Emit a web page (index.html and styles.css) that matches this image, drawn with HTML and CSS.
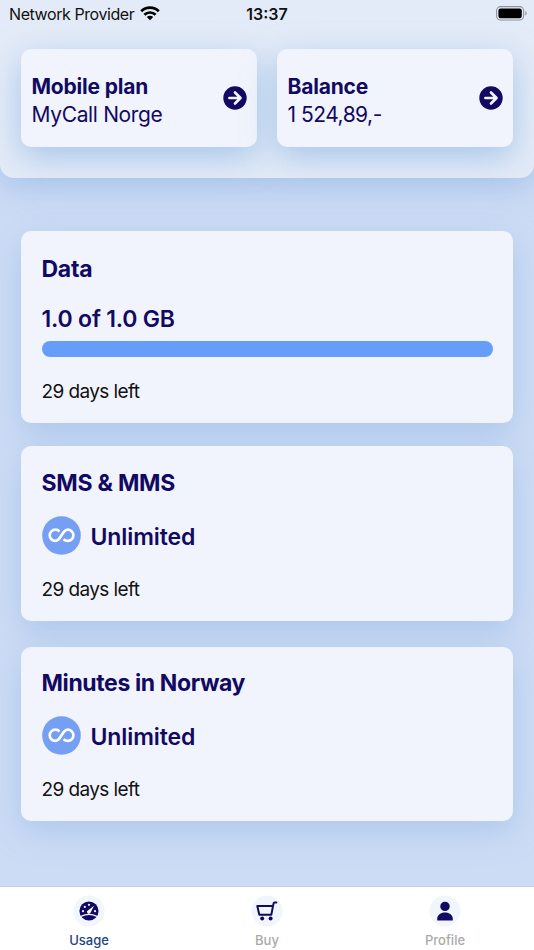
FILE: index.html
```html
<!DOCTYPE html>
<html lang="en">

<head>
	<meta charset="utf-8">
	<title>Usage</title>
	<link rel="stylesheet" href="styles.css">
</head>

<body>

	<header class="header">
		<div class="status">
			<div class="provider">
				<span>Network Provider</span>
				<svg class="wifi" width="20" height="15" viewBox="0 0 20 15" fill="none" stroke="#000" stroke-width="2.7">
					<path d="M1.2 5.3a12.6 12.6 0 0 1 17.6 0M4.4 8.8a8 8 0 0 1 11.2 0" />
					<path d="M10 14.3 6.8 11.1a4.6 4.6 0 0 1 6.4 0z" fill="#000" stroke="none" />
				</svg>
			</div>
			<div class="time">13:37</div>
			<svg class="battery" width="31" height="15" viewBox="0 0 31 15">
				<rect x=".6" y=".6" width="27" height="13.4" rx="4" fill="none" stroke="#8d929d" stroke-width="1.1" />
				<rect x="2.4" y="2.4" width="23.4" height="9.8" rx="2.3" />
				<path d="M29.3 5v4.7c1.8-.8 1.8-3.9 0-4.7z" fill="#8d929d" />
			</svg>
		</div>

		<div class="plans">
			<a class="plan">
				<div>
					<div class="plan-title">Mobile plan</div>
					<div class="plan-text">MyCall Norge</div>
				</div>
				<svg width="24" height="24" viewBox="0 0 24 24">
					<circle cx="12" cy="12" r="11.7" fill="#120a62" />
					<path d="M6.4 12h10.6M12 6.5l5.5 5.5-5.5 5.5" fill="none" stroke="#f2f5fd" stroke-width="2.7" stroke-linecap="round" stroke-linejoin="round" />
				</svg>
			</a>
			<a class="plan">
				<div>
					<div class="plan-title">Balance</div>
					<div class="plan-text sum">1 524,89,-</div>
				</div>
				<svg width="24" height="24" viewBox="0 0 24 24">
					<circle cx="12" cy="12" r="11.7" fill="#120a62" />
					<path d="M6.4 12h10.6M12 6.5l5.5 5.5-5.5 5.5" fill="none" stroke="#f2f5fd" stroke-width="2.7" stroke-linecap="round" stroke-linejoin="round" />
				</svg>
			</a>
		</div>
	</header>

	<main class="cards">
		<section class="card data">
			<h2>Data</h2>
			<div class="amount gb">1.0 of 1.0 GB</div>
			<div class="bar"></div>
			<p>29 days left</p>
		</section>

		<section class="card">
			<h2>SMS &amp; MMS</h2>
			<div class="unlimited">
				<svg width="39" height="39" viewBox="0 0 39 39">
					<circle cx="19.5" cy="19.5" r="19.3" fill="#759ff3" />
					<path d="M17.6 15.4c-1.2-1.1-2.7-1.7-4.3-1.7a5.6 5.6 0 0 0 0 11.2c5.9 0 6.6-11.2 12.5-11.2a5.6 5.6 0 0 1 0 11.2c-1.6 0-3.1-.6-4.3-1.7" fill="none" stroke="#fff" stroke-width="2.7" />
				</svg>
				<span class="amount">Unlimited</span>
			</div>
			<p>29 days left</p>
		</section>

		<section class="card">
			<h2 class="minutes">Minutes in Norway</h2>
			<div class="unlimited">
				<svg width="39" height="39" viewBox="0 0 39 39">
					<circle cx="19.5" cy="19.5" r="19.3" fill="#759ff3" />
					<path d="M17.6 15.4c-1.2-1.1-2.7-1.7-4.3-1.7a5.6 5.6 0 0 0 0 11.2c5.9 0 6.6-11.2 12.5-11.2a5.6 5.6 0 0 1 0 11.2c-1.6 0-3.1-.6-4.3-1.7" fill="none" stroke="#fff" stroke-width="2.7" />
				</svg>
				<span class="amount">Unlimited</span>
			</div>
			<p>29 days left</p>
		</section>
	</main>

	<nav class="tabs">
		<a class="tab active">
			<svg width="32" height="32" viewBox="0 0 32 32">
				<circle cx="16" cy="16" r="15.5" fill="#f1f5fc" />
				<circle cx="16" cy="16" r="9.6" fill="#120a62" />
				<path d="M8 21.4q8-4 16 0" fill="none" stroke="#f1f5fc" stroke-width="1.2" />
				<path d="M14 16.2 21 10.8l-3.6 7.2a2 2 0 0 1-3.4-1.8z" fill="#fff" />
				<g fill="#f1f5fc">
					<circle cx="10" cy="16.2" r="1.1" />
					<circle cx="11.8" cy="11.9" r="1.1" />
					<circle cx="16" cy="9.8" r="1.1" />
					<circle cx="22" cy="16.2" r="1.1" />
				</g>
			</svg>
			<span>Usage</span>
		</a>
		<a class="tab">
			<svg width="32" height="32" viewBox="0 0 32 32">
				<circle cx="16" cy="16" r="15.5" fill="#f1f5fc" />
				<path d="M25.4 7.6h-1.7q-1 0-1.2 1l-.5 2.5H6.3l2 8.6h12L22 11.1" fill="none" stroke="#120a62" stroke-width="2" stroke-linecap="round" stroke-linejoin="round" />
				<circle cx="11.2" cy="23.6" r="2" fill="#120a62" />
				<circle cx="19.6" cy="23.6" r="2" fill="#120a62" />
			</svg>
			<span>Buy</span>
		</a>
		<a class="tab">
			<svg width="32" height="32" viewBox="0 0 32 32">
				<circle cx="16" cy="16" r="15.5" fill="#f1f5fc" />
				<circle cx="16" cy="11.4" r="4.7" fill="#120a62" />
				<path d="M8.2 25.4v-1.6c0-3.9 3.4-6.4 7.8-6.4s7.8 2.5 7.8 6.4v1.6z" fill="#120a62" />
			</svg>
			<span>Profile</span>
		</a>
	</nav>

</body>

</html>
```
FILE: styles.css
```css
* {
	margin: 0;
	padding: 0;
	box-sizing: border-box;
}

body {
	display: flex;
	flex-direction: column;
	height: 950px;
	overflow: hidden;
	background-color: #cddcf5;
	color: #120a62;
	font-family: Inter, "Liberation Sans", sans-serif;
}

.header {
	height: 178px;
	border-radius: 0 0 14px 14px;
	background-color: #e4ebf8;
	box-shadow: 0 8px 36px rgba(120, 165, 220, 0.45);
}

.status {
	display: grid;
	grid-template-columns: 1fr auto 1fr;
	align-items: center;
	height: 27px;
	padding: 0 7px 0 9px;
	color: #111;
	font-size: 16px;
}

.provider {
	display: flex;
	align-items: center;
	gap: 6px;
	letter-spacing: -0.42px;
}

.time {
	margin-right: 2px;
	font-weight: 600;
}

.battery {
	justify-self: end;
}

.plans {
	display: flex;
	gap: 20px;
	padding: 22px 21px 0;
}

.plan {
	display: flex;
	flex: 1;
	align-items: center;
	justify-content: space-between;
	height: 98px;
	padding: 5px 10px 0 10.5px;
	border-radius: 10px;
	background-color: #f1f4fc;
	box-shadow: 0 10px 32px rgba(115, 168, 220, 0.55);
}

.plan svg {
	margin-top: -5px;
}

.plan-title {
	font-size: 21px;
	font-weight: 700;
	letter-spacing: -0.2px;
	line-height: 28px;
}

.plan-text {
	font-size: 21px;
	letter-spacing: -0.35px;
	line-height: 28px;
}

.sum {
	letter-spacing: -0.5px;
}

.cards {
	flex: 1;
	padding: 52.5px 21px 0;
}

.card {
	height: 174.5px;
	margin-bottom: 26px;
	padding: 21.5px 20.5px 0;
	border-radius: 10px;
	background-color: #f1f4fc;
	box-shadow: 0 10px 32px rgba(120, 165, 220, 0.38);
}

.data {
	height: 192px;
	margin-bottom: 23.5px;
	padding-top: 23px;
}

.card h2 {
	font-size: 23px;
	font-weight: 700;
	letter-spacing: -0.25px;
	line-height: 30px;
}

.data h2 {
	margin-bottom: 20px;
}

.card .minutes {
	letter-spacing: -0.38px;
}

.amount {
	font-size: 23px;
	font-weight: 600;
	letter-spacing: -0.1px;
	line-height: 30px;
}

.gb {
	letter-spacing: -0.2px;
}

.bar {
	height: 16px;
	margin-top: 7px;
	border-radius: 8px;
	background-color: #659df9;
}

.unlimited {
	display: flex;
	align-items: center;
	gap: 10px;
	margin-top: 18px;
}

.unlimited .amount {
	padding-top: 3px;
}

.card p {
	margin-top: 22px;
	color: #111;
	font-size: 19px;
	letter-spacing: -0.6px;
	line-height: 26px;
}

.tabs {
	display: flex;
	height: 64px;
	border-top: 1px solid #c5cfdf;
	background-color: #fff;
}

.tab {
	display: flex;
	flex: 1;
	flex-direction: column;
	align-items: center;
	padding-top: 8px;
	color: #aaa;
	font-size: 13px;
	font-weight: 500;
	line-height: 16px;
}

.tab span {
	margin-top: 5px;
}

.active {
	color: #24457f;
}
```
